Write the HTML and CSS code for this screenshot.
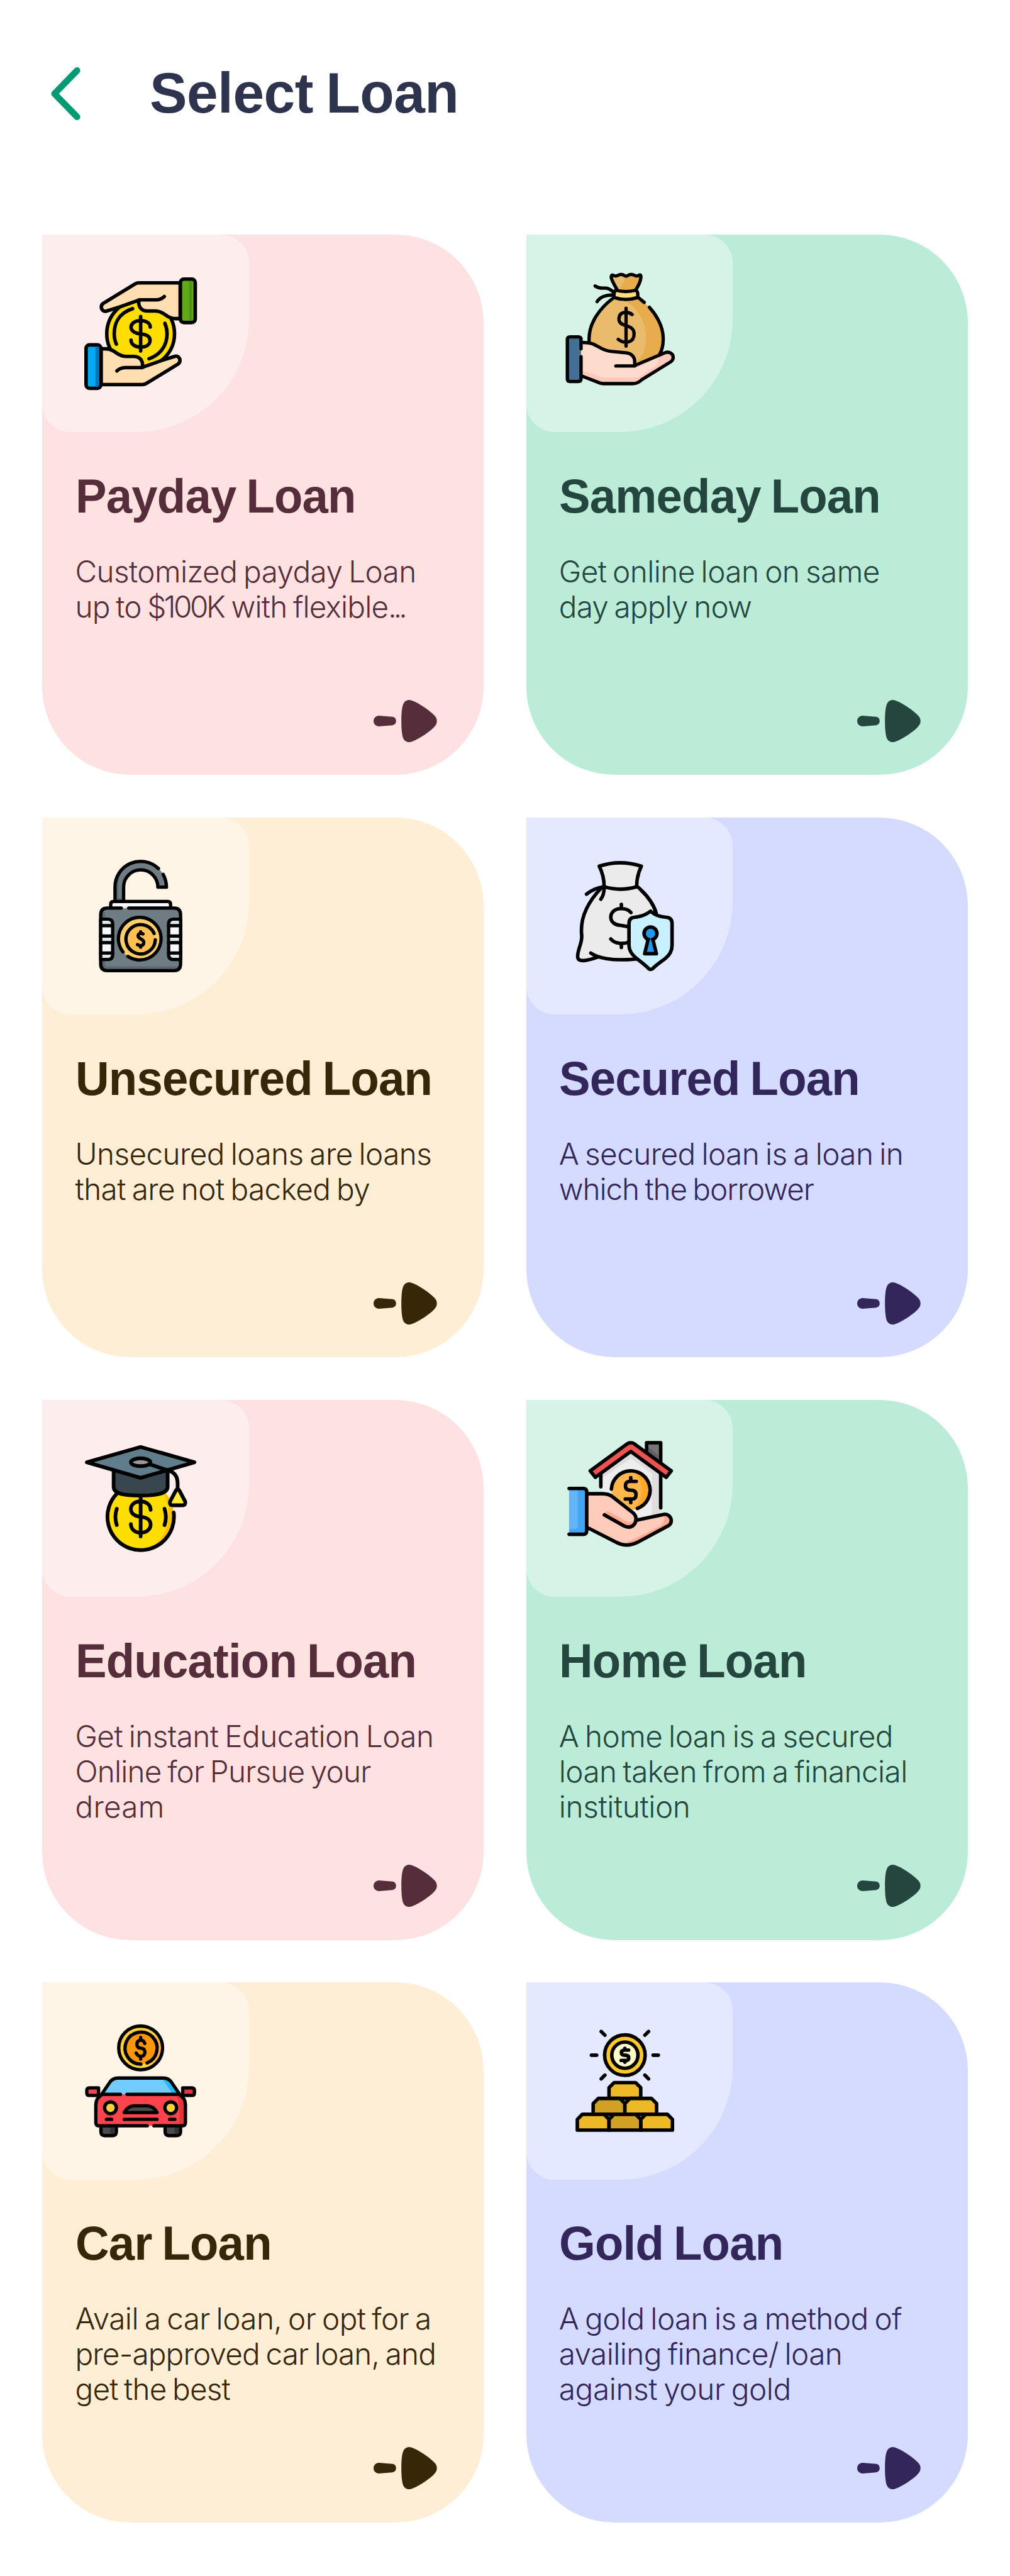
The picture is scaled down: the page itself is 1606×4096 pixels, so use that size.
FILE: index.html
```html
<!DOCTYPE html>
<html lang="en">
<head>
<meta charset="utf-8">
<title>Select Loan</title>
<link rel="stylesheet" href="styles.css">
</head>
<body>
<header class="header">
  <svg class="back" viewBox="87 115 50 90"><path d="M131.500 120.500L93 160l38.500 39.500"/></svg>
  <h1 class="page-title">Select Loan</h1>
</header>

<svg class="defs">
  <symbol id="arrow" viewBox="48 36 324 216"><path d="M76 116C60 116 48 128 48 144C48 160 60 171 76 171L145 165C156 164 163 155 163 144C163 132 156 123 145 122ZM190 144C190 110 192 80 198 62C204 42 218 36 230 36C260 38 330 85 356 112C367 122 372 132 372 144C372 156 367 165 356 176C328 205 258 250 230 252C218 252 203 246 197 225C192 205 190 175 190 144Z"/></symbol>
</svg>

<main class="grid">
  <article class="card pink">
    <div class="badge">
      <svg class="icon" viewBox="252 246 576 576">
        <circle cx="540" cy="534" r="173" fill="#fedd00"/>
        <path class="n" d="M499 406C430 428 405 480 405 534C405 555 408 570 416 587M664 481C672 500 675 515 675 534C675 595 640 642 583 662M540 446V622M589 500C589 478 565 467 540 467C512 467 491 480 491 501C491 522 515 533 540 535C568 537 588 547 588 568C588 590 568 602 540 602C515 602 491 590 491 567"/>
        <g id="hand" fill="#ffdfb2">
          <path d="M742 274H530Q520 274 512 279L349 379C336 388 336 405 347 415C352 420 360 420 367 418L430 398L532 362C525 390 540 418 575 418H615C640 418 655 428 672 441C688 453 700 457 720 457H742Z"/>
          <path class="n" d="M532 361H620Q645 360 661 344"/>
        </g>
        <use href="#hand" transform="rotate(180 540 534)"/>
        <rect x="743" y="255" width="76" height="222" rx="18" fill="#60aa17"/>
        <path class="f" d="M789 264h7q5 2 5 8v188q0 6-5 8h-7z" fill="#4f9016"/>
        <rect x="261" y="591" width="76" height="222" rx="18" fill="#03a9f4"/>
        <path class="f" d="M309 600h12q6 2 6 8v188q0 6-6 8h-12z" fill="#0277bd"/>
      </svg>
    </div>
    <h2>Payday Loan</h2>
    <p>Customized payday Loan<br><span class="snug">up to <span class="digits">$100</span>K with flexible<span class="dots">...</span></span></p>
    <svg class="arrow"><use href="#arrow"/></svg>
  </article>

  <article class="card green">
    <div class="badge">
      <svg class="icon" viewBox="252 246 576 576" stroke-width="17">
        <path class="f" fill="#eabb6c" d="M480 352C410 405 357 480 357 560V640L590 697L715 640Q736 610 736 560C736 480 680 400 605 350Z"/>
        <path class="f" fill="#e7ad4c" d="M545 366C610 410 648 480 648 550C648 610 630 650 598 680L590 697L720 640Q736 610 736 560C736 480 690 405 605 352Z"/>
        <path class="n" d="M480 352C410 405 357 480 357 560V580M665 399C710 450 736 505 736 560Q736 610 715 645M607 348L639 374"/>
        <path class="f" fill="#e7ad4c" d="M497 305C480 275 470 255 470 243C472 230 478 234 485 238C505 243 503 231 520 231C537 231 535 240 546 240C557 240 555 231 573 231C590 231 590 243 607 238C618 230 622 234 622 245C620 265 612 280 598 306Q545 325 497 305Z"/>
        <path class="f" fill="#eabb6c" d="M472 240L549 240L510 312L497 305Z"/>
        <path class="n" d="M500 309C480 275 470 255 470 243C472 230 478 234 485 238C505 243 503 231 520 231C537 231 535 240 546 240C557 240 555 231 573 231C590 231 590 243 607 238C618 230 622 234 622 245C620 265 612 285 596 309"/>
        <path fill="#fedf7c" d="M493 312Q545 325 597 312C608 318 608 345 602 350Q545 368 488 350C480 340 480 320 493 312Z"/>
        <path class="n" d="M388 290C410 305 425 300 444 301C465 303 472 315 486 325M398 370C415 345 440 335 485 336M546 404V597M577 436C560 422 510 415 510 460C510 505 587 480 587 535C587 580 540 588 506 563"/>
        <path class="f" fill="#fedccd" d="M316 579C370 577 385 590 420 609C440 620 450 622 475 625L550 632C575 635 590 655 590 675V697L745 631C765 623 787 635 787 655Q787 668 775 677L625 770Q605 789 580 789H430Q420 789 410 785L316 748Z"/>
        <path class="f" fill="#fec9bd" d="M316 719L425 758H595Q605 758 612 755L700 695Q712 688 710 650L760 632C780 625 787 640 787 655Q787 668 775 677L625 770Q605 789 580 789H430L316 748Z"/>
        <path class="n" d="M320 579C370 577 385 590 420 609C440 620 450 622 475 625L550 632C575 635 590 655 590 675V697L745 631C765 623 787 635 787 655Q787 668 775 677L625 770Q605 789 580 789H430Q420 789 410 785L320 750M494 699H590"/>
        <path class="f" fill="#426f93" d="M246 550h70v228h-70z"/>
        <path class="n" d="M316 611V563Q316 550 302 550H260Q246 550 246 563V765Q246 778 260 778H302Q316 778 316 765V651"/>
      </svg>
    </div>
    <h2>Sameday Loan</h2>
    <p>Get online loan on same<br><span class="snug">day apply now</span></p>
    <svg class="arrow"><use href="#arrow"/></svg>
  </article>

  <article class="card cream">
    <div class="badge">
      <svg class="icon" viewBox="252 252 576 576" stroke-width="17">
        <path class="f" fill="#6f7c84" d="M409 465V391A131 131 0 0 1 672 392H628A87 87 0 0 0 453 391V465Z"/>
        <path class="f" fill="#5f6b74" d="M417 458V391Q417 350 445 310Q425 350 426 391V448H445V458Z"/>
        <path class="n" d="M409 465V391A131 131 0 0 1 631 297M655 327Q671 355 672 392H628A87 87 0 0 0 453 391V465"/>
        <path fill="#f6f7fb" d="M387 499V480Q387 465 402 465H678Q693 465 693 480V499"/>
        <rect class="f" x="336" y="499" width="408" height="320" rx="34" fill="#6f7c84"/>
        <path class="f" fill="#5d6870" d="M344 520h14v268q0 9 12 9h366v14H360q-16-4-16-20z"/>
        <path class="f" fill="#e0e7ee" d="M449 490h22v10h-22z"/>
        <path class="n" d="M441 499H370Q336 499 336 533V785Q336 819 370 819H710Q744 819 744 785V533Q744 499 710 499H479"/>
        <g id="clip">
          <path fill="#f8f9fc" d="M336 556H372Q397 556 397 580V738Q397 762 372 762H336Z"/>
          <path class="f" fill="#e0e7ec" d="M345 564h27q15 2 16 18h-43zM345 650h44v18h-44zM345 737h43q-1 13-16 15h-27z"/>
          <path class="n" d="M336 589H397M336 642H397M336 676H397M336 729H397"/>
        </g>
        <use href="#clip" transform="translate(1080) scale(-1 1)"/>
        <circle class="f" cx="540" cy="659" r="109" fill="#fecf68"/>
        <circle class="f" cx="540" cy="659" r="74" fill="#fec051"/>
        <path class="n" d="M475 746A109 109 0 1 0 450 723M615 661A75 75 0 1 1 609 629M552 631C535 624 527 632 527 642C528 658 556 655 556 674C556 692 540 696 524 686M540 620V626M540 693V699"/>
      </svg>
    </div>
    <h2>Unsecured Loan</h2>
    <p>Unsecured loans are loans<br>that are not backed by</p>
    <svg class="arrow"><use href="#arrow"/></svg>
  </article>

  <article class="card blue">
    <div class="badge">
      <svg class="icon" viewBox="252 252 576 576">
        <path class="f" fill="#ebebeb" d="M418 396C340 480 312 560 319 635C325 675 290 720 299 756C315 775 360 768 400 752Q450 765 515 765Q570 765 620 755L700 640Q710 480 604 388Q515 415 440 392Z"/>
        <path fill="#ebebeb" d="M409 285Q515 250 624 285Q600 335 600 390Q515 415 434 390Q434 335 409 285Z"/>
        <path class="n" d="M418 398C340 480 312 560 319 635C325 675 295 715 299 750C302 778 350 768 400 750M366 729C410 760 490 764 530 763Q580 762 610 757M604 390Q680 455 700 525M344 428Q385 395 434 390Q435 430 417 454M522 480V500M571 522C555 502 530 502 520 502C480 502 468 530 468 545C468 570 490 586 515 587Q545 590 575 600M468 657C490 682 530 685 560 673M522 682V700"/>
        <path fill="#c8f0ff" d="M671 515Q700 543 750 546Q781 547 781 578V690Q781 730 745 758C710 783 690 800 680 810Q671 815 663 810C650 795 630 780 598 755Q561 725 561 690V578Q561 548 590 546Q640 540 671 515Z"/>
        <path fill="#2497e8" d="M660 655L641 732H701L682 655Z"/>
        <circle cx="671" cy="629" r="33" fill="#2497e8"/>
        <path class="f" fill="#2497e8" d="M671 652L679 680H663Z"/>
      </svg>
    </div>
    <h2>Secured Loan</h2>
    <p>A secured loan is a loan in<br><span class="tight">which the borrower</span></p>
    <svg class="arrow"><use href="#arrow"/></svg>
  </article>

  <article class="card pink">
    <div class="badge">
      <svg class="icon" viewBox="252 258 576 576" stroke-width="19">
        <circle class="f" cx="540" cy="640" r="169" fill="#fedd00"/>
        <path class="f" fill="#fec107" d="M640 508C705 560 705 730 590 797C680 770 712 700 709 618C700 560 690 540 660 515Z"/>
        <path class="n" d="M709 618A170 170 0 1 1 418 522M418 599Q404 640 418 682M662 599Q676 640 662 682M540 535V740M591 604C590 575 565 561 540 561C510 561 490 578 490 600C490 625 515 639 540 640C570 642 591 655 591 680C591 705 568 721 540 721C512 721 491 705 490 677"/>
        <path fill="#38474f" d="M402 405V485C402 522 450 531 540 531C620 531 678 522 678 485V405"/>
        <path fill="#607d8b" d="M540 283L815 361L540 441L265 361Z"/>
        <ellipse cx="540" cy="361" rx="50" ry="20" fill="#9a9a9a"/>
        <path class="n" d="M585 371L680 403Q729 415 729 470V500"/>
        <path fill="#ffeb3a" d="M722 502Q729 496 736 502L768 562Q770 581 755 581H703Q687 581 690 562Z"/>
      </svg>
    </div>
    <h2>Education Loan</h2>
    <p>Get instant Education Loan<br><span class="snug">Online for Pursue your</span><br><span class="loose">dream</span></p>
    <svg class="arrow"><use href="#arrow"/></svg>
  </article>

  <article class="card green">
    <div class="badge">
      <svg class="icon" viewBox="252 258 576 576">
        <path class="f" fill="#eeeeee" d="M417 410L570 308L723 410V630L600 660L417 500Z"/>
        <path class="f" fill="#dedede" d="M426 415L570 318L723 415V630L678 640V418L570 342L426 440Z"/>
        <path class="n" d="M417 415V486M723 410V594"/>
        <path fill="#757575" d="M651 310V261H723V365"/>
        <path class="f" fill="#616161" d="M660 285L714 328V352L660 312Z"/>
        <path fill="#ef5350" d="M570 261Q580 261 588 267L777 405L751 438L570 306L389 438L363 405L552 267Q560 261 570 261Z"/>
        <circle class="f" cx="570" cy="504" r="99" fill="#ffb74d"/>
        <path class="f" fill="#ffa726" d="M570 405C642 430 642 570 575 603A99 99 0 0 0 570 405Z"/>
        <path class="n" d="M471 498A99 99 0 1 1 604 597M570 440V458M598 459H562Q543 461 543 482Q543 504 570 504Q597 504 597 527Q597 549 577 549H542M570 549V567"/>
        <path class="f" fill="#ffccbc" d="M345 522H425Q460 522 480 540L585 622Q597 632 597 658L735 628C760 622 777 640 777 660Q777 675 765 684L605 770Q550 797 500 772L345 693Z"/>
        <path class="f" fill="#ffab91" d="M535 775Q560 768 590 752L722 685Q745 670 740 630C760 622 777 640 777 660Q777 675 765 684L605 770Q570 787 535 782ZM435 618Q448 606 462 615L540 660Q570 675 592 650Q594 680 560 692L435 625Z"/>
        <path class="n" d="M345 522H425Q460 522 480 540L582 620Q600 636 596 658L735 628C760 622 777 640 777 660Q777 675 765 684L605 770Q550 797 500 772L345 693M435 630L537 687Q570 702 590 676Q597 665 596 655"/>
        <path class="f" fill="#42a5f5" d="M255 495h90v234h-90z"/>
        <path class="f" fill="#64b5f6" d="M255 495h45v190q0 17-17 17h-28z"/>
        <path class="n" d="M255 495H327Q345 495 345 513V711Q345 729 327 729H255"/>
      </svg>
    </div>
    <h2>Home Loan</h2>
    <p>A home loan is a secured<br>loan taken from a financial<br><span class="even">institution</span></p>
    <svg class="arrow"><use href="#arrow"/></svg>
  </article>

  <article class="card cream">
    <div class="badge">
      <svg class="icon" viewBox="252 249 576 576" stroke-width="17">
        <circle cx="540" cy="369" r="112" fill="#ffd03b"/>
        <path class="f" fill="#ffb04a" d="M590 290Q640 320 643 370Q640 420 600 448Q625 420 628 370Q625 320 590 290Z"/>
        <circle class="f" cx="540" cy="370" r="82" fill="#fc970a"/>
        <path class="n" d="M541 452A82 82 0 1 1 573 446M540 315V327M561 346Q555 329 541 329Q521 331 521 350Q521 369 541 370Q562 372 562 391Q560 412 541 412Q524 411 517 395M540 412V426"/>
        <path class="f" fill="#73ccff" d="M345 606L382 545Q396 523 425 523H655Q684 523 698 545L735 606Z"/>
        <path class="f" fill="#27b9f2" d="M655 531L700 600H728L695 545Q680 526 655 528Z"/>
        <path class="f" fill="#ff434d" d="M345 606Q311 620 311 660V750Q311 767 328 767H752Q769 767 769 750V660Q769 620 735 606Z"/>
        <path class="f" fill="#e93437" d="M715 612Q738 630 738 665V765H762V660Q755 620 715 612Z"/>
        <path fill="#4b4b4b" d="M337 770V798Q337 817 356 817H397Q416 817 416 798V770M665 770V798Q665 817 684 817H724Q744 817 744 798V770"/>
        <path class="f" fill="#333" d="M384 775h24v22q0 12-12 12h-12zM714 775h22v22q0 12-12 12h-10z"/>
        <path class="n" d="M345 606Q311 624 311 660V750Q311 767 328 767H574M608 767H752Q769 767 769 750V660Q769 624 735 606M341 606L382 545Q396 523 425 523H655Q684 523 698 545L739 606M341 606H437M470 606H739"/>
        <path fill="#ff434d" d="M325 573H278Q265 573 265 586V600Q265 612 278 612H325Z"/>
        <path fill="#e93437" d="M755 573H802Q815 573 815 586V600Q815 612 802 612H755Z"/>
        <circle cx="386" cy="675" r="30" fill="#ffd03b"/>
        <circle cx="694" cy="675" r="30" fill="#ffd03b"/>
        <path fill="#4b4b4b" d="M456 699Q475 666 505 665H575Q605 666 624 699Z"/>
        <path class="n" d="M365 734H392M456 734H624M688 734H715"/>
      </svg>
    </div>
    <h2>Car Loan</h2>
    <p>Avail a car loan, or opt for a<br><span class="snug">pre-approved car loan, and</span><br><span class="snug">get the best</span></p>
    <svg class="arrow"><use href="#arrow"/></svg>
  </article>

  <article class="card blue">
    <div class="badge">
      <svg class="icon" viewBox="252 249 576 576">
        <circle cx="540" cy="406" r="103.500" fill="#ffc928"/>
        <circle cx="540" cy="406" r="67" fill="#fff9c8"/>
        <path class="n" d="M559 380H540Q522 380 522 393Q522 406 540 406Q560 406 560 420Q560 433 545 433H521M540 371V378M540 434V442M369 406H396M684 406H711M419 285L438 304M661 285L642 304M438 508L419 527M642 508L661 527"/>
        <path fill="#edb927" d="M459 627V572L485 546H595L621 572V627Z"/>
        <path fill="#d3a026" d="M378 708V653L404 627H514L540 653V708Z"/>
        <path fill="#edb927" d="M540 708V653L566 627H676L702 653V708Z"/>
        <path fill="#edb927" d="M297 789V734L323 708H433L459 734V789ZM621 789V734L647 708H757L783 734V789Z"/>
        <path fill="#d3a026" d="M459 789V734L485 708H595L621 734V789Z"/>
      </svg>
    </div>
    <h2>Gold Loan</h2>
    <p>A gold loan is a method of<br>availing finance/ loan<br><span class="even">against your gold</span></p>
    <svg class="arrow"><use href="#arrow"/></svg>
  </article>
</main>
</body>
</html>
```
FILE: styles.css
```css
:root {
  --u: 0.9336px;
}

* {
  box-sizing: border-box;
}

body {
  margin: 0;
  background: #fff;
}

h1, h2, p {
  margin: 0;
}

.defs {
  display: none;
}

.header {
  display: flex;
  align-items: flex-start;
  gap: calc(118 * var(--u));
  height: calc(400 * var(--u));
  padding: calc(102 * var(--u)) 0 0 calc(87 * var(--u));
}

.back {
  width: calc(50 * var(--u));
  height: calc(90 * var(--u));
  margin-top: calc(13 * var(--u));
  overflow: visible;
  fill: none;
  stroke: #009b72;
  stroke-width: 11;
  stroke-linecap: round;
  stroke-linejoin: round;
}

.page-title,
.card h2 {
  font-family: "Liberation Sans", Arial, sans-serif;
  font-weight: 700;
  white-space: nowrap;
  word-spacing: -4px;
  transform: scaleX(0.98);
  transform-origin: 0 0;
}

.page-title {
  font-size: calc(97.5 * var(--u));
  line-height: calc(113 * var(--u));
  letter-spacing: -0.5px;
  color: #2f344e;
}

.grid {
  display: grid;
  grid-template-columns: repeat(2, calc(752 * var(--u)));
  grid-auto-rows: calc(920 * var(--u));
  gap: calc(72 * var(--u));
  padding: 0 calc(72 * var(--u));
  height: calc(3988 * var(--u));
}

.card {
  display: flex;
  flex-direction: column;
  overflow: hidden;
  padding-bottom: calc(56 * var(--u));
  border-radius: 0 calc(150 * var(--u)) calc(150 * var(--u));
}

.pink { background: #fee2e2; color: #562e3b; }
.green { background: #bbecd8; color: #24463f; }
.cream { background: #ffeed6; color: #372608; }
.blue { background: #d4dbff; color: #33265a; }

.badge {
  width: calc(352 * var(--u));
  height: calc(336 * var(--u));
  padding: calc(72 * var(--u));
  border-radius: 0 calc(48 * var(--u)) calc(192 * var(--u)) calc(48 * var(--u));
  background: rgba(255, 255, 255, 0.4);
}

.icon {
  display: block;
  width: calc(192 * var(--u));
  height: calc(192 * var(--u));
  overflow: visible;
  stroke: #000;
  stroke-linecap: round;
  stroke-linejoin: round;
}

.icon:not([stroke-width]) { stroke-width: 18; }
.icon .n { fill: none; }
.icon .f { stroke: none; }

.card h2 {
  margin: calc(60.5 * var(--u)) 0 0 calc(56 * var(--u));
  font-size: calc(81.2 * var(--u));
  line-height: calc(96 * var(--u));
  letter-spacing: -0.8px;
}

.card p {
  margin: calc(50.9 * var(--u)) 0 0 calc(56 * var(--u));
  font: 300 calc(51.1 * var(--u)) / calc(60 * var(--u)) Inter, sans-serif;
  letter-spacing: -0.6px;
  word-spacing: -3px;
  white-space: nowrap;
}

.loose { letter-spacing: 0.2px; }
.even { letter-spacing: -0.4px; }
.snug { letter-spacing: -0.85px; }
.tight { letter-spacing: -1.1px; }
.digits { letter-spacing: -3.5px; }
.dots { letter-spacing: -5px; }

.arrow {
  align-self: flex-end;
  width: calc(108 * var(--u));
  height: calc(72 * var(--u));
  margin: auto calc(80 * var(--u)) 0 0;
  fill: currentColor;
}
```
